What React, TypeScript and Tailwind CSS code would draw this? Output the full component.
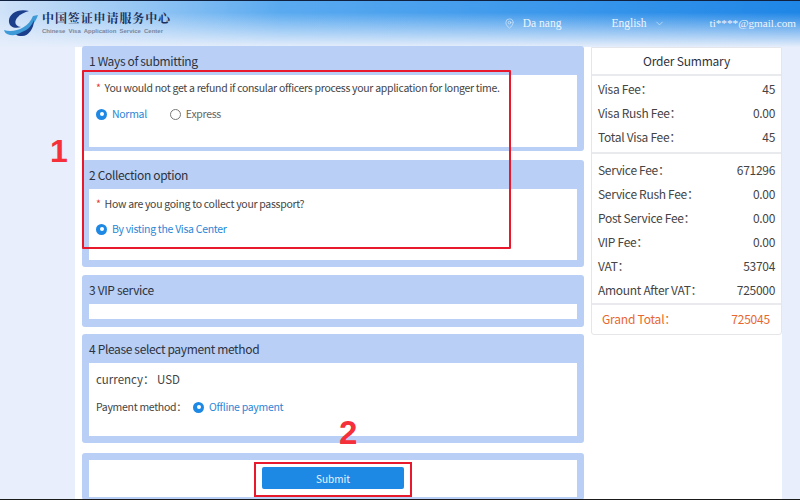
import { ChevronDown, MapPin } from 'lucide-react';

const FONT = "font-['Noto_Sans_CJK_SC','Noto_Sans',sans-serif]";

const VISA_ROWS = [
  ['Visa Fee：', '45'],
  ['Visa Rush Fee：', '0.00'],
  ['Total Visa Fee：', '45'],
];

const SERVICE_ROWS = [
  ['Service Fee：', '671296'],
  ['Service Rush Fee：', '0.00'],
  ['Post Service Fee：', '0.00'],
  ['VIP Fee：', '0.00'],
  ['VAT：', '53704'],
  ['Amount After VAT：', '725000'],
];

function Radio({ on }: { on?: boolean }) {
  return on ? (
    <span className="w-[11px] h-[11px] rounded-full bg-[#1e88e5] flex items-center justify-center shrink-0">
      <span className="w-[4px] h-[4px] rounded-full bg-white" />
    </span>
  ) : (
    <span className="w-[11px] h-[11px] rounded-full border border-[#777] bg-white shrink-0" />
  );
}

function Section({
  title,
  bodyH,
  className,
  children,
}: {
  title: string;
  bodyH: string;
  className?: string;
  children?: React.ReactNode;
}) {
  return (
    <section className={`bg-[#b9cff6] rounded-[3px] px-[7px] pb-[7px] ${className ?? ''}`}>
      <h2 className="h-[29px] flex items-center text-[12px] tracking-[-0.35px] text-[#2c3340] font-normal">{title}</h2>
      <div className={`bg-white ${bodyH}`}>{children}</div>
    </section>
  );
}

function FeeRow({ label, value }: { label: string; value: string }) {
  return (
    <div className="h-[24px] flex items-center justify-between text-[12px] tracking-[-0.3px] text-[#444]">
      <span>{label}</span>
      <span>{value}</span>
    </div>
  );
}

function Logo() {
  return (
    <svg width="36" height="28" viewBox="0 0 36 28" className="shrink-0">
      <path d="M25 2 C14 -1 4 5 5 13 C5.500 18 11 20 17 18 C11 17 10 13 13 9 C16 5 21 3 25 2 Z" fill="#1c3f8c" />
      <path d="M0 21 C9 24 24 20 29 7 L34 6 C30 19 14 30 3 25 C1.500 24 0.500 23 0 21 Z" fill="#3f9bd8" />
      <path d="M18 23 C24 21 28 16 30 11 C30 19 25 27 18 27 C15 27 13 26.500 12 25.500 C14 25 16 24 18 23 Z" fill="#1c3f8c" />
    </svg>
  );
}

export default function App() {
  return (
    <div className={`w-[800px] h-[500px] overflow-hidden relative bg-[#e8eefb] flex flex-col ${FONT}`}>
      <header className="h-[47px] shrink-0 border-t border-[#10213f] bg-[linear-gradient(to_bottom,transparent_25%,#e6eefb_100%),linear-gradient(to_right,#cfe2f8_0%,#5aaaf0_35%,#1f86e6_100%)] flex items-center pl-[4px]">
        <div className="flex items-center gap-[2px] mt-[-3px]">
          <Logo />
          <div className="leading-none">
            <div className="text-[12px] font-bold text-[#1c2f5c] tracking-[0.9px] font-['Noto_Serif_CJK_SC','Noto_Sans_CJK_SC',serif]">中国签证申请服务中心</div>
            <div className="text-[6px] font-bold text-[#77879f] mt-[4px] font-['Liberation_Sans',sans-serif] [word-spacing:1.5px]">Chinese Visa Application Service Center</div>
          </div>
        </div>
        <nav className="ml-auto flex items-center text-[11.5px] text-[#eef5fd] font-['Liberation_Serif',serif] mt-[-1px]">
          <MapPin size={11} strokeWidth={1.2} className="mr-[8px]" />
          <span className="mr-[50px]">Da nang</span>
          <span>English</span>
          <ChevronDown size={11} strokeWidth={1.2} className="ml-[7px] mr-[45px]" />
          <span className="text-[11.2px] mr-[4px]">ti****@gmail.com</span>
        </nav>
      </header>

      <div className="flex flex-1 min-h-0 pl-[75px] pr-[18px]">
        <div className="flex-1 bg-white flex gap-[7px] px-[7px] min-w-0">
          <main className="w-[502px] flex flex-col shrink-0">
            <Section title="1 Ways of submitting" bodyH="h-[72px]" className="h-[105px] -mt-[1px]">
              <div className="pl-[7px] pt-[5px] text-[10.500px] tracking-[-0.3px]">
                <p className="text-[#444] h-[16px] leading-[16px]">
                  <span className="text-[#e53935] mr-[4px]">*</span>You would not get a refund if consular officers process your application for longer time.
                </p>
                <div className="mt-[10px] flex items-center h-[16px]">
                  <Radio on />
                  <span className="ml-[5px] text-[#2b86d6]">Normal</span>
                  <span className="ml-[23px] flex"><Radio /></span>
                  <span className="ml-[5px] text-[#666]">Express</span>
                </div>
              </div>
            </Section>
            <Section title="2 Collection option" bodyH="h-[71px]" className="h-[107px] mt-[9px]">
              <div className="pl-[7px] pt-[7px] text-[10.500px] tracking-[-0.3px]">
                <p className="text-[#444] h-[16px] leading-[16px]">
                  <span className="text-[#e53935] mr-[4px]">*</span>How are you going to collect your passport?
                </p>
                <div className="mt-[9px] flex items-center h-[16px]">
                  <Radio on />
                  <span className="ml-[5px] text-[#2b86d6]">By visting the Visa Center</span>
                </div>
              </div>
            </Section>
            <Section title="3 VIP service" bodyH="h-[15px]" className="h-[52px] mt-[8px]" />
            <Section title="4 Please select payment method" bodyH="h-[73px]" className="h-[109px] mt-[7px]">
              <div className="pl-[7px] pt-[7px]">
                <p className="text-[11.500px] text-[#444] h-[18px] leading-[18px]">currency：&nbsp;USD</p>
                <div className="mt-[11px] flex items-center text-[10.500px] tracking-[-0.3px] h-[16px] text-[#444]">
                  <span className="w-[97px]">Payment method：</span>
                  <span className="flex"><Radio on /></span>
                  <span className="ml-[5px] text-[#2b86d6]">Offline payment</span>
                </div>
              </div>
            </Section>
            <section className="bg-[#b9cff6] rounded-[3px] px-[7px] pt-[7px] pb-[3px] mt-[10px] h-[47px]">
              <div className="bg-white h-[37px] flex justify-center pt-[7px]">
                <button className="w-[142px] h-[22px] bg-[#1e88e5] rounded-[2px] text-[10px] text-[#eaf4fd] font-normal">Submit</button>
              </div>
            </section>
          </main>

          <aside className="w-[191px] h-[288px] shrink-0 bg-white border border-[#e4e6ea] rounded-b-[3px] text-[#444]">
            <h3 className="h-[28px] flex items-center justify-center text-[12px] tracking-[-0.2px] text-[#2c3340] font-normal border-b-2 border-[#e8eaee]">Order Summary</h3>
            <div className="px-[6px] pt-[1px] pb-[3px] border-b-2 border-[#e8eaee]">
              {VISA_ROWS.map(([l, v]) => <FeeRow key={l} label={l} value={v} />)}
            </div>
            <div className="px-[6px] pt-[4px] pb-[1px] border-b-2 border-[#e8eaee]">
              {SERVICE_ROWS.map(([l, v]) => <FeeRow key={l} label={l} value={v} />)}
            </div>
            <div className="h-[28px] pl-[10px] pr-[11px] flex items-center justify-between text-[12px] tracking-[-0.2px] text-[#e8672d]">
              <span>Grand Total：</span>
              <span>725045</span>
            </div>
          </aside>
        </div>
      </div>

      {/* annotations from the article, drawn over the page */}
      <div className="absolute left-[82px] top-[70px] w-[429px] h-[179px] border-2 border-[#e8192c] rounded-[1px]" />
      <div className="absolute left-[254px] top-[462px] w-[158px] h-[35px] border-2 border-[#e8192c]" />
      <span className="absolute left-[50px] top-[131px] text-[32px] leading-[40px] font-bold text-[#f5303a] font-['Liberation_Sans',sans-serif]">1</span>
      <span className="absolute left-[339px] top-[413px] text-[33px] leading-[40px] font-bold text-[#f5303a] font-['Liberation_Sans',sans-serif]">2</span>
      <div className="absolute left-0 right-0 bottom-0 h-[1px] bg-[#1a1a1a]" />
    </div>
  );
}
